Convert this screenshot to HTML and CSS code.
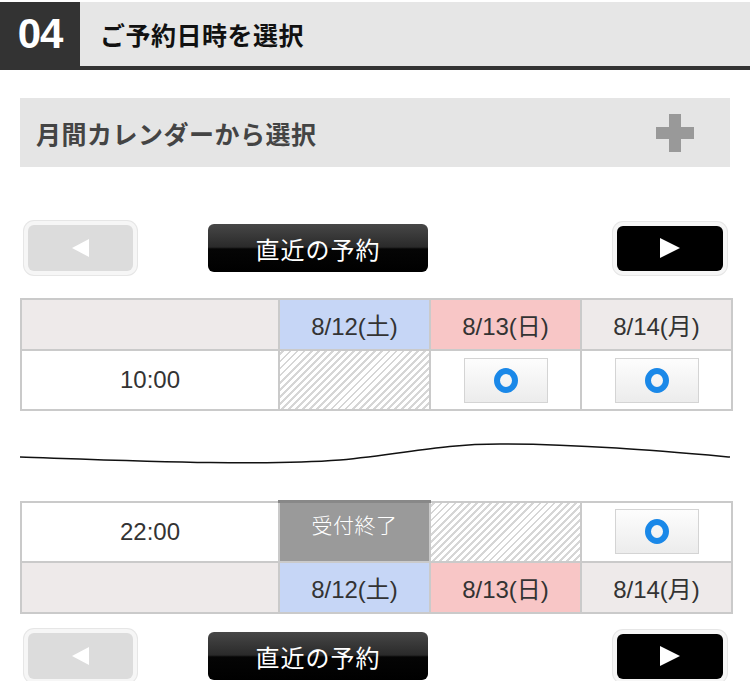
FILE: index.html
```html
<!DOCTYPE html>
<html lang="ja">
<head>
<meta charset="utf-8">
<title>ご予約日時を選択</title>
<link rel="stylesheet" href="styles.css">
</head>
<body>
<div class="page">
  <div class="step-head">
    <div class="step-num">04</div>
    <div class="step-title">ご予約日時を選択</div>
  </div>

  <div class="accordion">
    <span class="acc-label">月間カレンダーから選択</span>
    <span class="plus"></span>
  </div>

  <div class="nav nav-top">
    <span class="btn-prev"><span class="tri-left"></span></span>
    <span class="btn-recent">直近の予約</span>
    <span class="btn-next"><span class="tri-right"></span></span>
  </div>

  <table class="cal">
    <colgroup><col class="c-time"><col class="c-day"><col class="c-day"><col class="c-day"></colgroup>
    <tr class="days">
      <td class="d-blank"></td>
      <td class="d-sat">8/12(土)</td>
      <td class="d-sun">8/13(日)</td>
      <td class="d-mon">8/14(月)</td>
    </tr>
    <tr class="slot">
      <td class="time">10:00</td>
      <td class="closed"></td>
      <td><span class="ok"><span class="ring"></span></span></td>
      <td><span class="ok"><span class="ring"></span></span></td>
    </tr>
  </table>

  <div class="wave">
    <svg width="710" height="89" viewBox="0 0 710 89"><path d="M0 46 C120 50 240 55 320 49 C385 43 420 33 480 33 C560 33 640 40 710 46" fill="none" stroke="#111" stroke-width="1.5"/></svg>
  </div>

  <table class="cal cal-b">
    <colgroup><col class="c-time"><col class="c-day"><col class="c-day"><col class="c-day"></colgroup>
    <tr class="slot">
      <td class="time">22:00</td>
      <td class="ended"><div class="ended-label">受付終了</div></td>
      <td class="closed"></td>
      <td><span class="ok"><span class="ring"></span></span></td>
    </tr>
    <tr class="days">
      <td class="d-blank"></td>
      <td class="d-sat">8/12(土)</td>
      <td class="d-sun">8/13(日)</td>
      <td class="d-mon">8/14(月)</td>
    </tr>
  </table>

  <div class="nav nav-bottom">
    <span class="btn-prev"><span class="tri-left"></span></span>
    <span class="btn-recent">直近の予約</span>
    <span class="btn-next"><span class="tri-right"></span></span>
  </div>
</div>
</body>
</html>
```
FILE: styles.css
```css
html, body {
  margin: 0;
  padding: 0;
  background: #fff;
}
body {
  font-family: "Liberation Sans", "Noto Sans CJK JP", sans-serif;
  color: #333;
}
.page {
  width: 750px;
  padding-top: 2px;
}
.step-head {
  display: flex;
  height: 64px;
  background: #e6e6e6;
  border-bottom: 4px solid #333;
}
.step-num {
  width: 80px;
  background: #333;
  color: #fff;
  font-weight: bold;
  font-size: 42px;
  display: flex;
  align-items: center;
  justify-content: center;
  letter-spacing: -1px;
}
.step-title {
  display: flex;
  align-items: center;
  padding-left: 20px;
  font-size: 25px;
  font-weight: bold;
  color: #111;
  font-family: "Noto Sans CJK JP", sans-serif;
  letter-spacing: 0.5px;
}
.accordion {
  margin: 28px 20px 0;
  height: 69px;
  background: #e5e5e5;
  display: flex;
  align-items: center;
  justify-content: space-between;
  padding: 0 36px 0 16px;
}
.acc-label {
  font-family: "Noto Sans CJK JP", sans-serif;
  font-size: 25px;
  font-weight: bold;
  color: #444;
  letter-spacing: 0.5px;
}
.plus {
  position: relative;
  width: 38px;
  height: 38px;
}
.plus::before, .plus::after {
  content: "";
  position: absolute;
  background: #999;
}
.plus::before { left: 0; right: 0; top: 13px; height: 12px; }
.plus::after { top: 0; bottom: 0; left: 13px; width: 12px; }

.nav {
  display: flex;
  align-items: center;
  margin: 0 20px;
  height: 50px;
}
.nav-top { margin-top: 56px; margin-bottom: 25px; }
.nav-bottom { margin-top: 17px; }
.btn-prev, .btn-next {
  display: flex;
  align-items: center;
  justify-content: center;
  border-radius: 6px;
}
.btn-prev {
  width: 105px;
  height: 46px;
  margin-left: 8px;
  background: #dcdcdc;
  box-shadow: 0 0 0 4px #f6f6f6, 0 0 0 5px #e6e6e6;
}
.btn-next {
  width: 106px;
  height: 45px;
  margin-left: auto;
  margin-right: 7px;
  background: #000;
  box-shadow: 0 0 0 4px #f6f6f6, 0 0 0 5px #e6e6e6;
}
.tri-left {
  width: 0; height: 0;
  border-top: 9px solid transparent;
  border-bottom: 9px solid transparent;
  border-right: 17px solid #fff;
}
.tri-right {
  width: 0; height: 0;
  border-top: 10px solid transparent;
  border-bottom: 10px solid transparent;
  border-left: 20px solid #fff;
}
.btn-recent {
  margin-left: 75px;
  width: 220px;
  height: 48px;
  border-radius: 6px;
  background: linear-gradient(#474747 0%, #2a2a2a 48%, #050505 52%, #000 100%);
  color: #fff;
  font-family: "Noto Sans CJK JP", sans-serif;
  font-size: 24px;
  display: flex;
  align-items: center;
  justify-content: center;
  letter-spacing: 1px;
}

.cal {
  margin: 0 20px;
  width: 710px;
  border-collapse: collapse;
  table-layout: fixed;
}
.c-time { width: 258px; }
.c-day { width: 151px; }
.cal td {
  border: 2px solid #cacaca;
  text-align: center;
  vertical-align: middle;
  padding: 0;
  font-size: 24px;
  color: #333;
}
.days td { height: 49px; }
.slot td { height: 58px; }
.d-blank, .d-mon { background: #eeeaea; }
.d-sat { background: #c6d6f6; }
.d-sun { background: #f8c6c6; }
.time { background: #fff; }
.closed {
  background: repeating-linear-gradient(-45deg, #fff 0, #fff 3px, #d6d6d6 3px, #d6d6d6 5px);
}
.cal td.ended {
  background: #9a9a9a;
  vertical-align: top;
  border-top: 3px solid #888;
}
.ended-label {
  padding-top: 6px;
  color: #fff;
  font-family: "Noto Sans CJK JP", sans-serif;
  font-size: 21px;
  font-weight: 300;
  letter-spacing: 0.5px;
}
.ok {
  display: inline-flex;
  align-items: center;
  justify-content: center;
  width: 82px;
  height: 43px;
  border: 1px solid #d4d4d4;
  background: linear-gradient(#fdfdfd, #ececec);
  vertical-align: middle;
}
.ring {
  width: 12px;
  height: 13px;
  border: 6px solid #1a88e8;
  border-radius: 50%;
}
.wave {
  margin: 0 20px;
  height: 89px;
  line-height: 0;
}
.wave svg { display: block; }
```
